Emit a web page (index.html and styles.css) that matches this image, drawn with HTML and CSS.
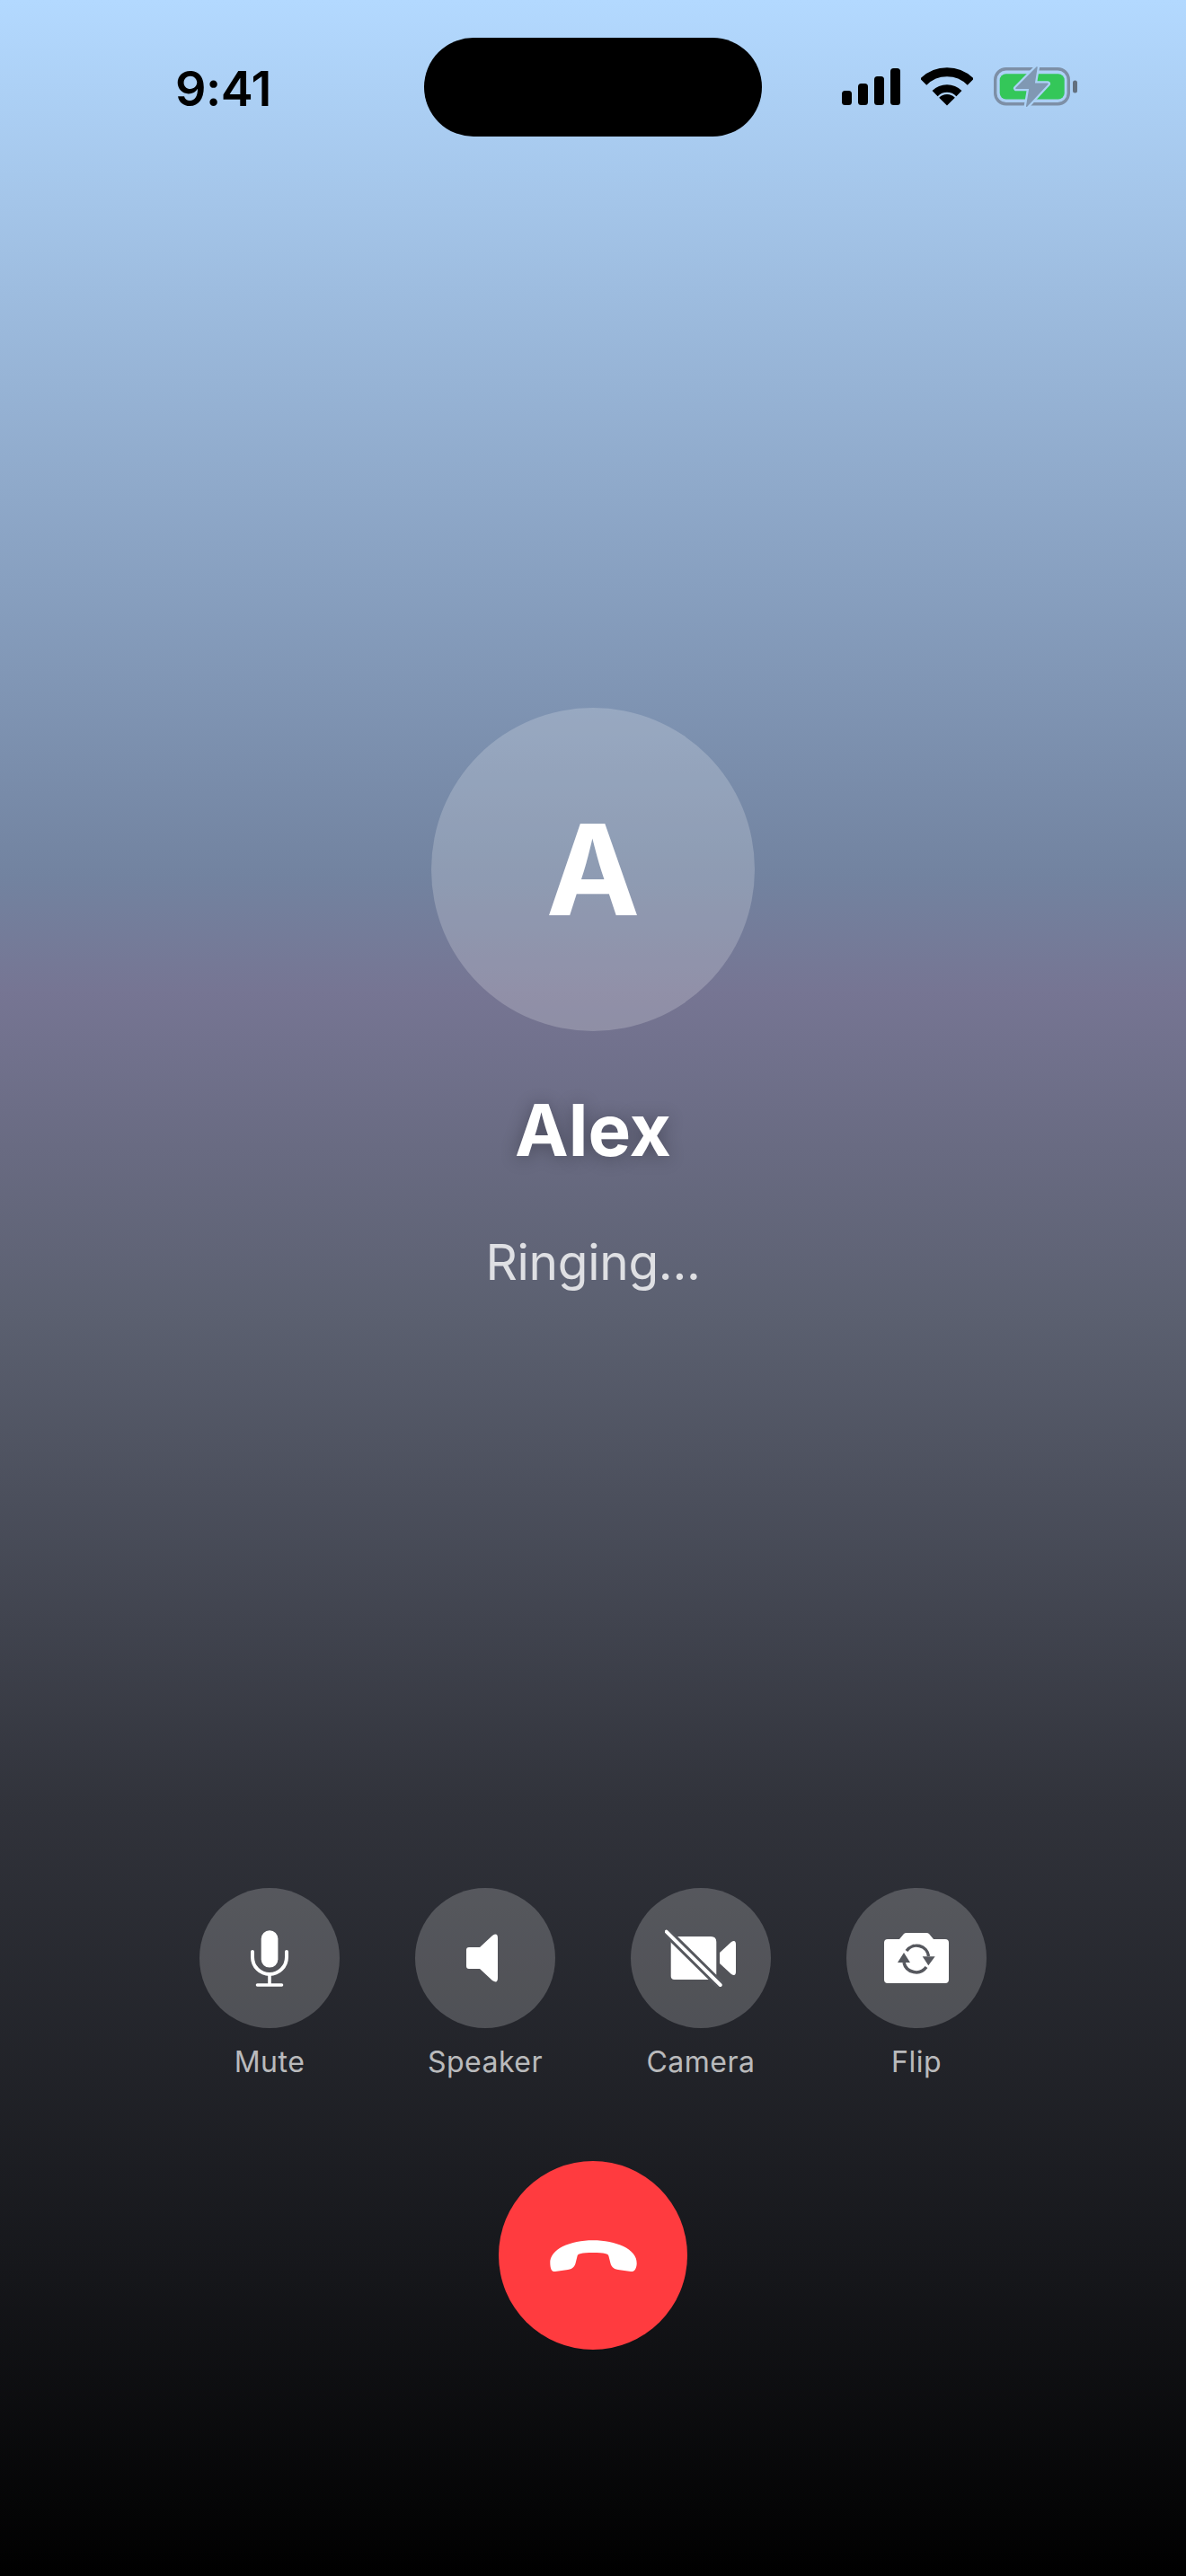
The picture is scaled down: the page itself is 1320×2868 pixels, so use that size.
FILE: index.html
```html
<!DOCTYPE html>
<html lang="en">
<head>
  <meta charset="UTF-8">
  <title>Calling Alex</title>
  <link rel="stylesheet" href="styles.css">
</head>
<body>
  <div class="screen">
    <!-- Status bar -->
    <div class="status-bar">
      <div class="time">9:41</div>
      <div class="island"></div>
      <div class="status-icons">
        <svg class="signal" viewBox="0 0 65 41" width="65" height="41">
          <rect x="0" y="25" width="11" height="16" rx="3.5"/>
          <rect x="18" y="17" width="11" height="24" rx="3.5"/>
          <rect x="36" y="9" width="11" height="32" rx="3.5"/>
          <rect x="54" y="0" width="11" height="41" rx="3.5"/>
        </svg>
        <svg class="wifi" viewBox="0 0 58 43" width="58" height="43">
          <path d="M2.7 16.2A37.2 37.2 0 0 1 55.3 16.2" fill="none" stroke="#000" stroke-width="10"/>
          <path d="M15.6 29.1A19 19 0 0 1 42.4 29.1" fill="none" stroke="#000" stroke-width="8.6"/>
          <path d="M29 42.5L20.2 33.7A12.5 12.5 0 0 1 37.8 33.7Z"/>
        </svg>
        <svg class="battery" viewBox="0 0 94 46" width="94" height="46">
          <rect x="1.7" y="2.7" width="81.6" height="39" rx="12" fill="none" stroke="#7d8fa6" stroke-width="3.4"/>
          <rect x="6.7" y="8.3" width="72" height="28.3" rx="7" fill="#34c759"/>
          <rect x="88" y="15.5" width="5" height="14" rx="2.5" fill="#63707f"/>
          <path d="M48 1L25 24.3H40L36.7 44.3L60 19.3H45Z" fill="#acd2f7" stroke="#acd2f7" stroke-width="6" stroke-linejoin="round"/>
          <path d="M48 1L25 24.3H40L36.7 44.3L60 19.3H45Z" fill="#8098b3" stroke="#8098b3" stroke-width="1.5" stroke-linejoin="round"/>
        </svg>
      </div>
    </div>

    <!-- Caller -->
    <div class="caller">
      <div class="avatar">A</div>
      <div class="name">Alex</div>
      <div class="status">Ringing...</div>
    </div>

    <!-- Call controls -->
    <div class="controls">
      <div class="control">
        <div class="control-btn">
          <svg viewBox="-40 -40 80 80" width="80" height="80">
            <rect x="-9.3" y="-30.7" width="18.7" height="41.3" rx="9.3" fill="#fff"/>
            <path d="M-19 -7v6a19 19 0 0 0 38 0v-6" fill="none" stroke="#fff" stroke-width="4" stroke-linecap="round"/>
            <path d="M0 18V30M-13.5 30H13.5" fill="none" stroke="#fff" stroke-width="3.6" stroke-linecap="round"/>
          </svg>
        </div>
        <span class="control-label">Mute</span>
      </div>
      <div class="control">
        <div class="control-btn">
          <svg viewBox="-40 -40 80 80" width="80" height="80">
            <path d="M-18 -12H-6L8 -25Q14 -29 14 -22V22Q14 29 8 25L-6 12H-18Q-21 12 -21 9V-9Q-21 -12 -18 -12Z" fill="#fff"/>
          </svg>
        </div>
        <span class="control-label">Speaker</span>
      </div>
      <div class="control">
        <div class="control-btn">
          <svg viewBox="-40 -40 80 80" width="80" height="80">
            <path d="M-33.3 -20Q-33.3 -24 -29.3 -24H11.3Q17.3 -24 17.3 -18V18Q17.3 24 11.3 24H-29.3Q-33.3 24 -33.3 20Z" fill="#fff"/>
            <path d="M21 -6L34 -18Q39 -21 39 -15V15Q39 21 34 18L21 6Z" fill="#fff"/>
            <path d="M-38.3 -29.3L21.7 30" stroke="#56585e" stroke-width="10"/>
            <path d="M-38.3 -29.3L21.7 30" stroke="#fff" stroke-width="4" stroke-linecap="round"/>
          </svg>
        </div>
        <span class="control-label">Camera</span>
      </div>
      <div class="control">
        <div class="control-btn">
          <svg viewBox="-40 -40 80 80" width="80" height="80">
            <path d="M-32 -21H-19L-14 -27Q-13 -28 -11 -28H11Q13 -28 14 -27L19 -21H32Q36 -21 36 -17V24Q36 28 32 28H-32Q-36 28 -36 24V-17Q-36 -21 -32 -21Z" fill="#fff"/>
            <path d="M13.5 -2A13.5 13.5 0 0 0 -11 -8M-14 5A14 14 0 0 0 11 10" fill="none" stroke="#56585e" stroke-width="3.5"/>
            <path d="M-21 5H-7L-14 -6ZM6.7 -1.7H20.7L13.3 8.3Z" fill="#56585e"/>
          </svg>
        </div>
        <span class="control-label">Flip</span>
      </div>
    </div>

    <div class="end-call">
      <svg viewBox="-60 -40 120 80" width="120" height="80">
        <path d="M-47.7 9C-48.5 -7 -25 -16.7 0 -16.7C25 -16.7 49.5 -7 48.7 9C48.5 15 46 18.5 42 18L28 16C22 15 20 12 19 7L17.5 1C17 -2 13 -3 0 -3C-13 -3 -17 -2 -17.5 1L-19 7C-20 12 -22 15 -28 16L-42 18C-46 18.5 -47.5 15 -47.7 9Z" fill="#fff"/>
      </svg>
    </div>
  </div>
</body>
</html>
```

FILE: styles.css
```css
* {
  box-sizing: border-box;
}

body {
  margin: 0;
  font-family: Inter, 'Noto Sans', sans-serif;
  color: #fff;
}

.screen {
  width: 1320px;
  height: 2868px;
  overflow: hidden;
  display: flex;
  flex-direction: column;
  align-items: center;
  background: linear-gradient(180deg, #b3d9ff 0%, #7283a0 34%, #767593 38.5%, #5b6070 51%, #31333b 70%, #16171b 88%, #000 100%);
}

/* Status bar */
.status-bar {
  width: 100%;
  height: 152px;
  padding-top: 42px;
  display: grid;
  grid-template-columns: 472px 376px 472px;
}

.time {
  margin-top: 24px;
  padding-left: 195px;
  font-size: 54px;
  line-height: 66px;
  font-weight: 600;
  letter-spacing: -0.5px;
  color: #000;
}

.island {
  height: 110px;
  border-radius: 55px;
  background: #000;
}

.status-icons {
  display: flex;
  align-items: flex-start;
  gap: 23px;
  padding: 33px 0 0 89px;
}

.signal {
  margin-top: 1px;
}

.battery {
  margin-top: -1px;
}

/* Caller */
.caller {
  margin-top: 636px;
  display: flex;
  flex-direction: column;
  align-items: center;
}

.avatar {
  width: 360px;
  height: 360px;
  border-radius: 50%;
  background: rgba(255, 255, 255, 0.2);
  display: flex;
  align-items: center;
  justify-content: center;
  font-size: 140px;
  font-weight: 700;
}

.name {
  margin-top: 60px;
  font-size: 80px;
  line-height: 100px;
  font-weight: 700;
  text-shadow: 0 2px 20px rgba(0, 0, 0, 0.3);
}

.status {
  margin-top: 62px;
  font-size: 55px;
  line-height: 70px;
  letter-spacing: -0.3px;
  color: rgba(255, 255, 255, 0.8);
}

/* Controls */
.controls {
  margin-top: 662px;
  display: flex;
  gap: 84px;
}

.control {
  width: 156px;
  display: flex;
  flex-direction: column;
  align-items: center;
  gap: 18px;
}

.control-btn {
  width: 156px;
  height: 156px;
  border-radius: 50%;
  background: rgba(255, 255, 255, 0.2);
  display: flex;
  align-items: center;
  justify-content: center;
}

.control-label {
  font-size: 32px;
  line-height: 40px;
  letter-spacing: 0.5px;
  white-space: nowrap;
  color: rgba(255, 255, 255, 0.7);
}

.end-call {
  margin-top: 90px;
  width: 210px;
  height: 210px;
  border-radius: 50%;
  background: #ff3b3f;
  display: flex;
  align-items: center;
  justify-content: center;
}
```
